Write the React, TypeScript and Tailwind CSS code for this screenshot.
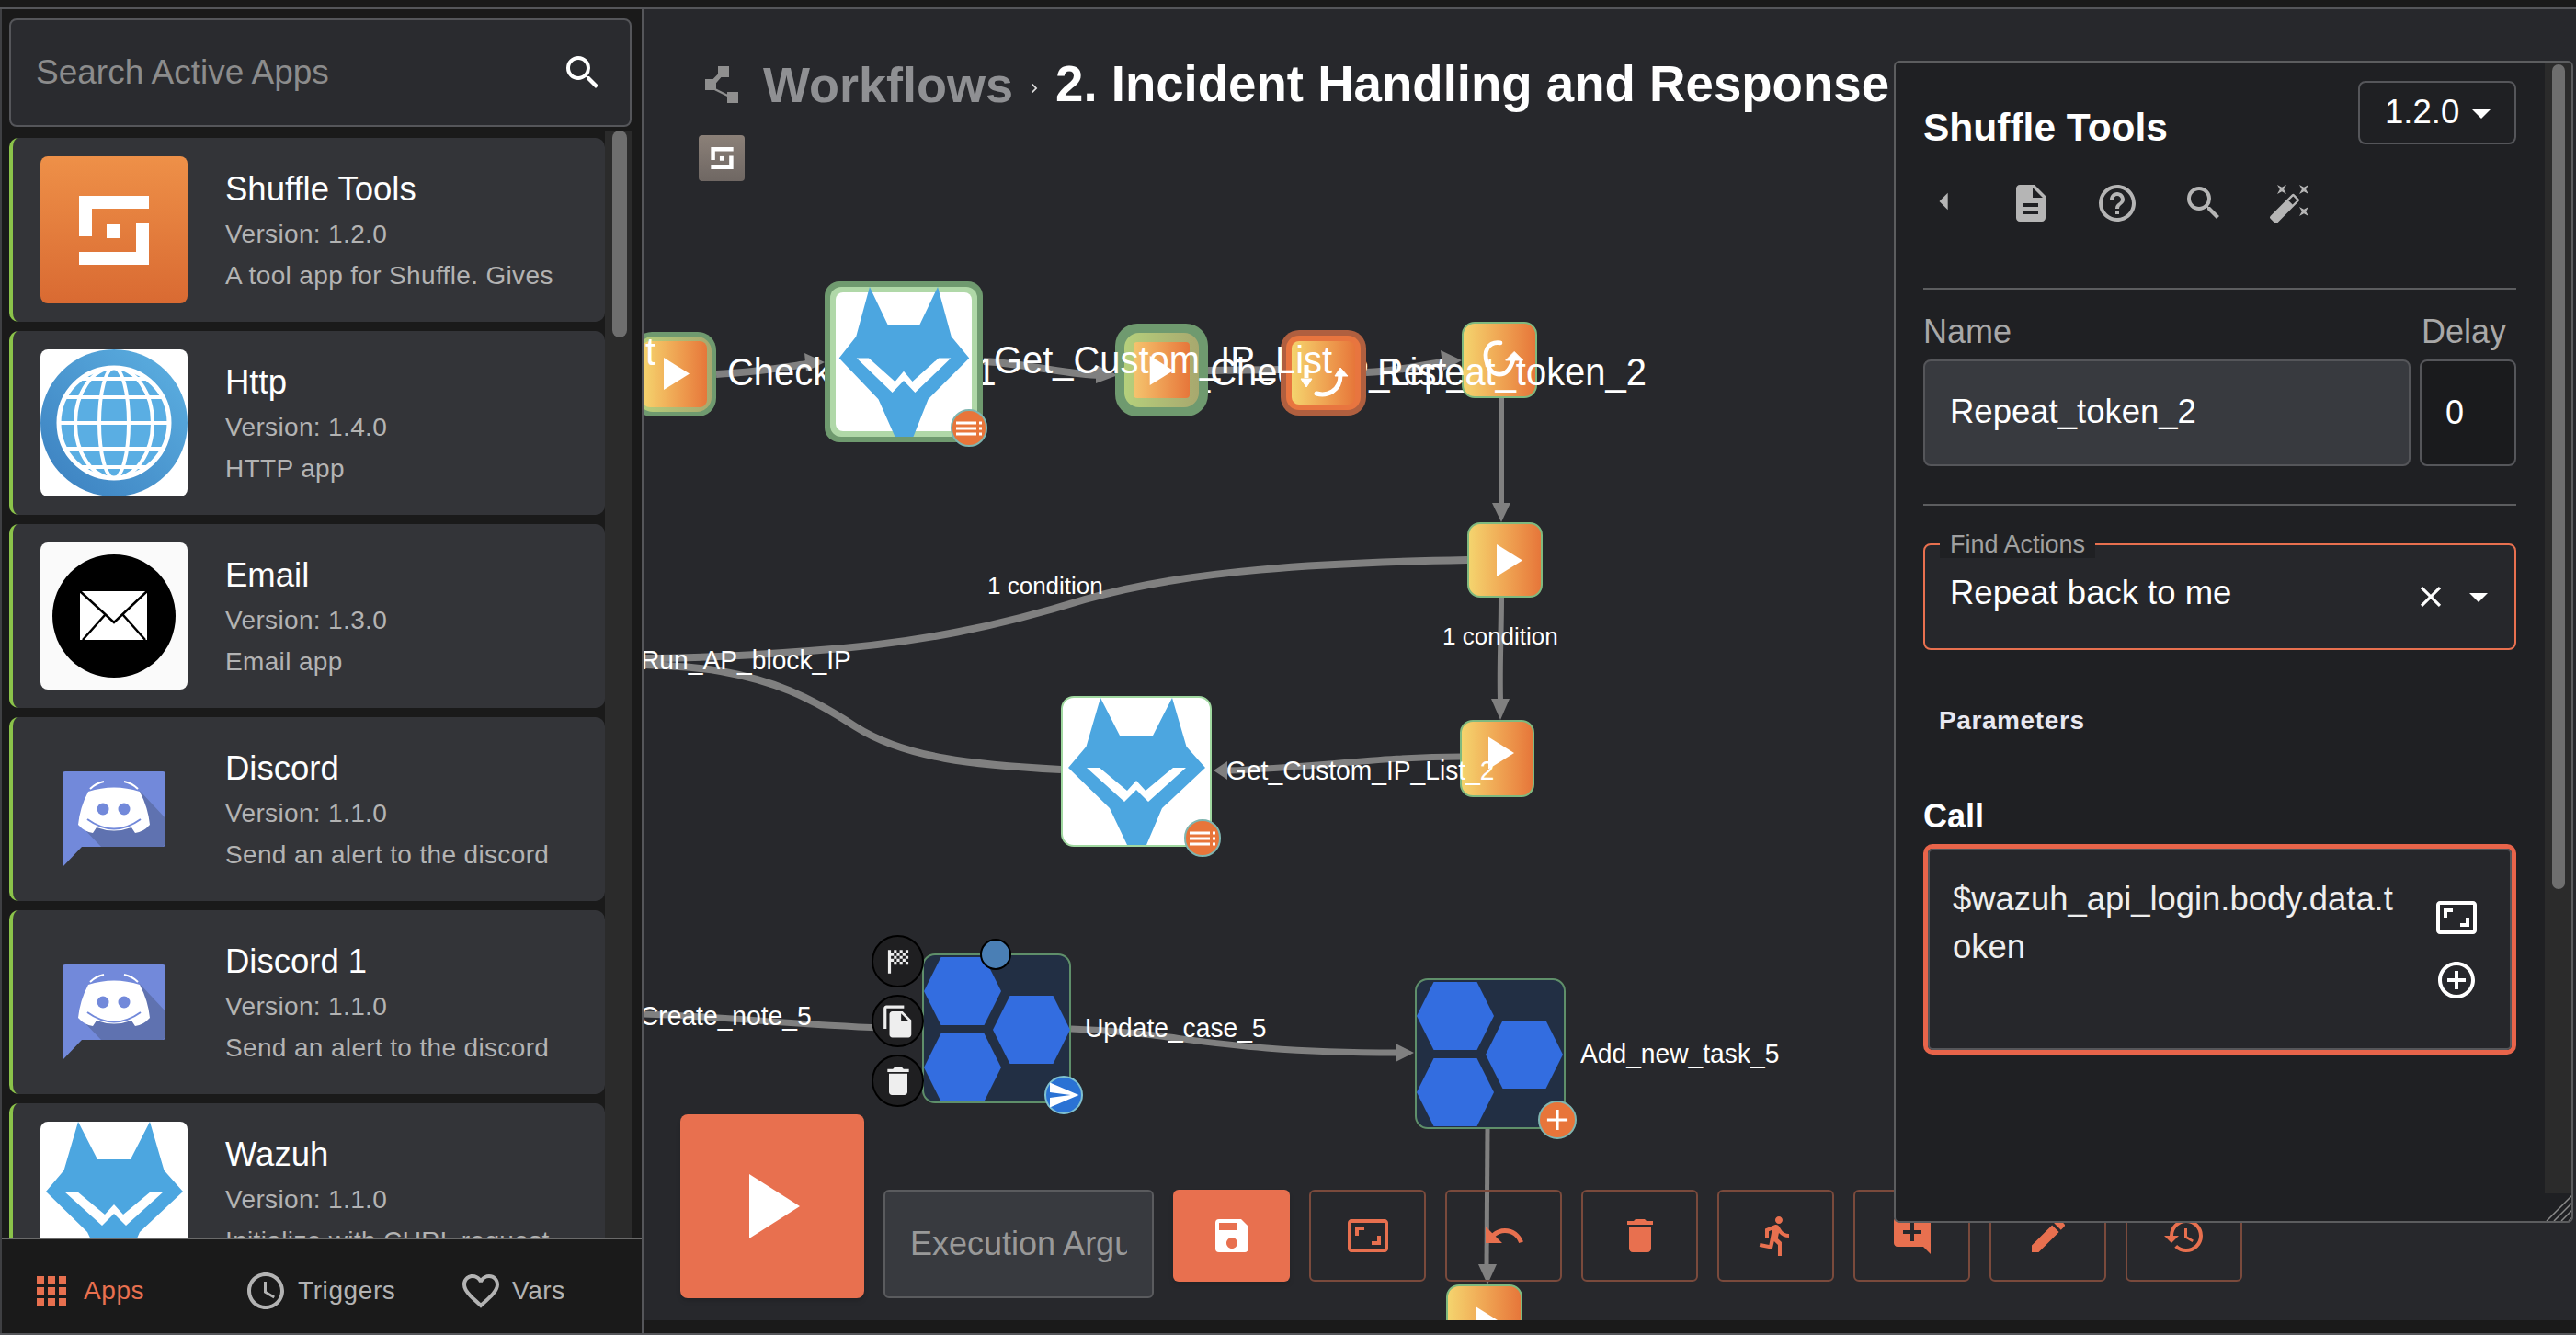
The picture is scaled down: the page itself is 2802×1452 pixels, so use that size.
import React from "react";
import {
  MdAccessTime,
  MdAdd,
  MdAddCircleOutline,
  MdAddComment,
  MdApps,
  MdArrowDropDown,
  MdArrowLeft,
  MdAspectRatio,
  MdAutoFixHigh,
  MdChevronRight,
  MdClose,
  MdDelete,
  MdDescription,
  MdDirectionsRun,
  MdEdit,
  MdFavoriteBorder,
  MdFileCopy,
  MdHelpOutline,
  MdHistory,
  MdSave,
  MdSearch,
  MdSend,
  MdSportsScore,
  MdUndo,
} from "react-icons/md";

function ShuffleLogo({ className }: { className: string }) {
  return (
    <svg viewBox="0 0 76 75" className={className} fill="#fff">
      <path d="M0 0H76V14H14V44H0Z" />
      <path d="M62 30H76V75H0V61H62Z" />
      <rect x="30" y="31" width="15" height="15" />
    </svg>
  );
}

function Fox({ className }: { className: string }) {
  return (
    <svg viewBox="0 0 160 160" className={className} preserveAspectRatio="none">
      <polygon
        points="41,0 62,41 98,41 119,0 134.5,53 155,76 108,120 91,160 70,160 51,120 6,76 25.5,53"
        fill="#4ca6e0"
      />
      <polygon points="26,76 40,76 70,101 80,90 90,101 120,76 134,76 93,113 80,100 67,113" fill="#fff" />
    </svg>
  );
}

function HttpIcon() {
  return (
    <svg viewBox="0 0 160 160" className="w-[160px] h-[160px]">
      <defs>
        <linearGradient id="globeRing" x1="0" y1="1" x2="1" y2="0">
          <stop offset="0" stopColor="#3b7fbf" />
          <stop offset="1" stopColor="#5db1e2" />
        </linearGradient>
        <clipPath id="globeClip">
          <circle cx="80" cy="80" r="60" />
        </clipPath>
      </defs>
      <circle cx="80" cy="80" r="80" fill="url(#globeRing)" />
      <circle cx="80" cy="80" r="60" fill="#5aaee3" stroke="#fff" strokeWidth="5" />
      <g clipPath="url(#globeClip)" fill="none" stroke="#fff" strokeWidth="4">
        <ellipse cx="80" cy="80" rx="16" ry="60" />
        <ellipse cx="80" cy="80" rx="42" ry="60" />
        <path d="M20 80H140M24 52H136M24 108H136M38 32H122M38 128H122" />
      </g>
    </svg>
  );
}

function EmailIcon() {
  return (
    <svg viewBox="0 0 160 160" className="w-[160px] h-[160px]">
      <circle cx="80" cy="80" r="67" fill="#000" />
      <rect x="43" y="53" width="73" height="53" fill="#fff" />
      <path
        d="M43 53L80 87L116 53M46 106L70 79M114 106L90 79"
        fill="none"
        stroke="#000"
        strokeWidth="2.5"
      />
    </svg>
  );
}

function DiscordIcon() {
  return (
    <svg viewBox="0 0 160 160" className="w-[160px] h-[160px]">
      <path
        d="M27 39H133Q136 39 136 42V118Q136 121 133 121H45L24 143V42Q24 39 27 39Z"
        fill="#7289da"
      />
      <polygon points="108,60 136,90 136,118 133,121 66,121 44,98 80,100 118,95" fill="#5f72b0" />
      <path
        d="M52 61Q80 52 108 61Q117 78 119 97Q112 105 103 106L99 100Q80 107 61 100L57 106Q48 105 41 97Q43 78 52 61Z"
        fill="#fff"
      />
      <path d="M54 58Q60 52 69 50M91 50Q100 52 106 58" fill="none" stroke="#fff" strokeWidth="2" />
      <path d="M51 91Q80 112 109 91" fill="none" stroke="#7289da" strokeWidth="2" />
      <circle cx="68" cy="80" r="6.5" fill="#7289da" />
      <circle cx="91" cy="80" r="6.5" fill="#7289da" />
    </svg>
  );
}

function AppCard({
  icon,
  title,
  version,
  desc,
  iconBg,
}: {
  icon: React.ReactNode;
  title: string;
  version: string;
  desc: string;
  iconBg: string;
}) {
  return (
    <div className="h-[200px] shrink-0 flex bg-[#333438] rounded-[10px] border-l-4 border-[#8bc34a] pl-[30px]">
      <div className={`w-[160px] h-[160px] mt-[20px] rounded-[8px] overflow-hidden shrink-0 ${iconBg}`}>
        {icon}
      </div>
      <div className="ml-[41px] pt-[38px]">
        <div className="text-[36.5px] leading-none text-white">{title}</div>
        <div className="mt-[7px] text-[28px] leading-[45px] tracking-[0.35px] text-[#b3b3b3]">{version}</div>
        <div className="text-[28px] leading-[45px] tracking-[0.35px] text-[#b3b3b3] whitespace-nowrap">{desc}</div>
      </div>
    </div>
  );
}

function Sidebar() {
  return (
    <div className="w-[700px] shrink-0 flex flex-col bg-[#1a1a1a] border-l-2 border-r-2 border-[#3f4043] border-r-[#55565a]">
      <div className="mt-[10px] ml-[8px] w-[677px] h-[118px] shrink-0 flex items-center justify-between pl-[27px] pr-[27px] bg-[#2a2b2f] border-2 border-[#55565a] rounded-[8px]">
        <span className="text-[37px] text-[#8c8c8c]">Search Active Apps</span>
        <MdSearch size={48} className="text-white" />
      </div>
      <div className="mt-[4px] ml-[8px] flex-1 min-h-0 flex overflow-hidden">
        <div className="w-[648px] pt-[8px] flex flex-col gap-[10px]">
          <AppCard
            title="Shuffle Tools"
            version="Version: 1.2.0"
            desc="A tool app for Shuffle. Gives"
            iconBg="bg-linear-to-b from-[#ee9048] to-[#d96a32] flex items-center justify-center"
            icon={<ShuffleLogo className="w-[76px] h-[75px]" />}
          />
          <AppCard title="Http" version="Version: 1.4.0" desc="HTTP app" iconBg="bg-white" icon={<HttpIcon />} />
          <AppCard title="Email" version="Version: 1.3.0" desc="Email app" iconBg="bg-[#fafafa]" icon={<EmailIcon />} />
          <AppCard
            title="Discord"
            version="Version: 1.1.0"
            desc="Send an alert to the discord"
            iconBg=""
            icon={<DiscordIcon />}
          />
          <AppCard
            title="Discord 1"
            version="Version: 1.1.0"
            desc="Send an alert to the discord"
            iconBg=""
            icon={<DiscordIcon />}
          />
          <AppCard
            title="Wazuh"
            version="Version: 1.1.0"
            desc="Initialize with CURL request"
            iconBg="bg-white"
            icon={<Fox className="w-[160px] h-[160px]" />}
          />
        </div>
        <div className="w-[29px] bg-[#2b2b2b]">
          <div className="mx-[8px] w-[16px] h-[225px] rounded-full bg-[#6e6e6e]" />
        </div>
      </div>
      <div className="h-[104px] shrink-0 flex items-center pt-[10px] pl-[30px] border-t-2 border-[#6a6a6a] text-[28px] tracking-[0.6px]">
        <div className="w-[233px] flex items-center gap-[11px] text-[#e8704f]">
          <MdApps size={48} />
          <span>Apps</span>
        </div>
        <div className="w-[234px] flex items-center gap-[11px] text-[#b3b3b3]">
          <MdAccessTime size={48} />
          <span>Triggers</span>
        </div>
        <div className="flex items-center gap-[10px] text-[#b3b3b3]">
          <MdFavoriteBorder size={48} />
          <span>Vars</span>
        </div>
      </div>
    </div>
  );
}

function Edges() {
  const stroke = "#808080";
  return (
    <svg viewBox="700 10 2102 1426" className="absolute left-0 top-0 w-[2102px] h-[1426px]">
      <g fill="none" stroke={stroke}>
        <path strokeWidth="8" d="M779 407C820 405 850 400 878 396" />
        <path strokeWidth="8" d="M1070 393C1120 396 1165 408 1196 408" />
        <path strokeWidth="8" d="M1314 403L1395 402" />
        <path strokeWidth="8" d="M1486 405C1520 404 1540 398 1570 394" />
        <path strokeWidth="6" d="M1633 433L1633 548" />
        <path strokeWidth="6" d="M1633 650C1633 690 1631 720 1632 762" />
        <path strokeWidth="8" d="M1596 609C1440 612 1290 620 1180 652C1090 680 1000 700 880 708C800 714 740 716 700 716" />
        <path strokeWidth="8" d="M1154 837C1060 832 985 825 930 790C880 757 840 740 784 730C760 726 730 724 700 723" />
        <path strokeWidth="7" d="M1590 823C1500 823 1430 835 1335 838" />
        <path strokeWidth="7" d="M700 1103C780 1105 860 1114 960 1118" />
        <path strokeWidth="7" d="M1165 1119C1280 1122 1320 1145 1520 1145" />
        <path strokeWidth="5" d="M1618 1228L1617 1378" />
      </g>
      <g fill={stroke}>
        <polygon points="897,394 875,384 877,404" />
        <polygon points="1216,408 1192,397 1192,417" />
        <polygon points="1590,392 1567,381 1570,403" />
        <polygon points="1633,568 1623,547 1643,547" />
        <polygon points="1632,783 1622,760 1642,760" />
        <polygon points="1320,838 1335,828 1335,848" />
        <polygon points="1538,1145 1518,1135 1518,1155" />
        <polygon points="1618,1397 1608,1375 1628,1375" />
      </g>
    </svg>
  );
}

function Triangle({ className }: { className: string }) {
  return (
    <svg viewBox="0 0 28 35" className={className}>
      <polygon points="0,0 28,17.5 0,35" fill="#fff" />
    </svg>
  );
}

function ListBadge({ className }: { className: string }) {
  return (
    <div className={`absolute w-[40px] h-[41px] rounded-full bg-[#e8753a] border-2 border-[#7fb5b0] flex items-center justify-center ${className}`}>
      <svg viewBox="0 0 28 16" className="w-[28px] h-[16px]">
        <path d="M0 2H22M0 8H22M0 14H22M25 2H28M25 8H28M25 14H28" stroke="#fff" strokeWidth="3" />
      </svg>
    </div>
  );
}

function HexNode({ className, children }: { className: string; children?: React.ReactNode }) {
  return (
    <div className={`absolute bg-[#222f44] border-2 border-[#5f8f6a] rounded-[14px] ${className}`}>
      <svg viewBox="0 0 162 163" className="absolute -left-[1px] -top-[1px] w-[162px] h-[163px]">
        <g fill="#336de0">
          <polygon points="1,40 19.5,3 66.5,3 85,40 66.5,77 19.5,77" />
          <polygon points="76,82 94.5,45 141.5,45 160,82 141.5,119 94.5,119" />
          <polygon points="1,123 19.5,86 66.5,86 85,123 66.5,160 19.5,160" />
        </g>
      </svg>
      {children}
    </div>
  );
}

function SideButton({ className, children }: { className: string; children: React.ReactNode }) {
  return (
    <div className={`absolute w-[57px] h-[57px] rounded-full bg-[#1f1f21] border-2 border-black flex items-center justify-center text-[#eee] ${className}`}>
      {children}
    </div>
  );
}

function Label({ className, children }: { className: string; children: React.ReactNode }) {
  return <div className={`absolute leading-none whitespace-nowrap text-white origin-left ${className}`}>{children}</div>;
}

function Diagram() {
  const plainNode = "absolute rounded-[14px] border-2 border-[#7fb97f] bg-linear-to-r from-[#f4d46e] to-[#e6763a] flex items-center justify-center";
  const bigLabel = "text-[42px] scale-x-[0.95]";
  const smallLabel = "text-[30px] scale-x-[0.94]";
  return (
    <>
      <Edges />

      {/* labels that sit under their nodes */}
      <Label className={`left-[91px] top-[374px] ${bigLabel}`}>Check_Status_1</Label>
      <Label className={`left-[594px] top-[374px] ${bigLabel}`}>_Check_IP_List_2</Label>

      {/* top row */}
      <div className="absolute left-[-11px] top-[351px] w-[90px] h-[92px] rounded-[20px] bg-[#6f9a6f] p-[5px]">
        <div className="w-full h-full rounded-[16px] bg-linear-to-r from-[#b5d07c] to-[#a8a86e] p-[5px]">
          <div className="w-full h-full rounded-[8px] bg-linear-to-r from-[#f4d46e] to-[#e6763a] relative">
            <Triangle className="absolute left-[23px] top-[18px] w-[28px] h-[35px]" />
          </div>
        </div>
      </div>
      <div className="absolute left-[197px] top-[296px] w-[172px] h-[175px] rounded-[16px] bg-[#6f9a6f] p-[6px]">
        <div className="relative w-full h-full rounded-[12px] bg-[#b0d8a8] p-[6px]">
          <div className="w-full h-full rounded-[8px] bg-white" />
          <Fox className="absolute left-[4px] top-0 w-[152px] h-[163px]" />
        </div>
      </div>
      <ListBadge className="left-[334px] top-[435px]" />

      <div className="absolute left-[513px] top-[342px] w-[101px] h-[101px] rounded-[24px] bg-[#6f9a6f] p-[10px]">
        <div className="w-full h-full rounded-[16px] bg-linear-to-r from-[#b5d07c] to-[#a8a86e] p-[10px]">
          <div className="w-full h-full rounded-[4px] bg-linear-to-r from-[#f4c46e] to-[#e6763a] flex items-center justify-center">
            <Triangle className="w-[29px] h-[32px]" />
          </div>
        </div>
      </div>

      <div className="absolute left-[693px] top-[349px] w-[93px] h-[93px] rounded-[20px] bg-[#b05f3f] p-[6px]">
        <div className="w-full h-full rounded-[14px] bg-[#e8753f] p-[6px]">
          <div className="relative w-full h-full rounded-[8px] bg-linear-to-r from-[#f4d46e] to-[#e6763a]">
            <svg viewBox="0 0 69 69" className="absolute left-0 top-0 w-[69px] h-[69px]" fill="none" stroke="#fff" strokeWidth="5">
              <path d="M16 26V40" />
              <polygon points="10,41 22,41 16,50" fill="#fff" strokeWidth="1" />
              <path d="M27 57C38 60 53 55 53 37" strokeLinecap="round" />
              <polygon points="53,29 47,38 61,38" fill="#fff" strokeWidth="1" />
            </svg>
          </div>
        </div>
      </div>

      <div className={`${plainNode} left-[890px] top-[340px] w-[82px] h-[83px]`}>
        <svg viewBox="0 0 82 83" className="w-[82px] h-[83px]" fill="none" stroke="#fff" strokeWidth="5">
          <path d="M42 22C28 20 22 32 27 46C31 60 50 66 57 40" strokeLinecap="round" />
          <polygon points="58,32 48,42 68,42" fill="#fff" strokeWidth="1" />
        </svg>
      </div>

      {/* middle */}
      <div className={`${plainNode} left-[896px] top-[558px] w-[82px] h-[82px]`}>
        <Triangle className="ml-[9px] w-[28px] h-[35px]" />
      </div>
      <div className={`${plainNode} left-[888px] top-[773px] w-[81px] h-[84px]`}>
        <Triangle className="ml-[9px] mb-[12px] w-[28px] h-[36px]" />
      </div>
      <div className="absolute left-[454px] top-[747px] w-[164px] h-[164px] rounded-[14px] bg-white border-2 border-[#a0d8a0]">
        <Fox className="w-full h-full" />
      </div>
      <ListBadge className="left-[588px] top-[881px]" />

      {/* hex nodes */}
      <HexNode className="left-[303px] top-[1027px] w-[162px] h-[163px]">
        <SideButton className="left-[-57px] top-[-22px]">
          <MdSportsScore size={38} />
        </SideButton>
        <SideButton className="left-[-57px] top-[43px]">
          <MdFileCopy size={38} />
        </SideButton>
        <SideButton className="left-[-57px] top-[108px]">
          <MdDelete size={40} />
        </SideButton>
        <div className="absolute left-[61px] top-[-18px] w-[34px] h-[34px] rounded-full bg-[#4a7fb5] border-2 border-black" />
        <div className="absolute left-[131px] top-[131px] w-[42px] h-[42px] rounded-full bg-[#2a72d4] border-2 border-[#7fc0d0] flex items-center justify-center">
          <MdSend size={36} className="text-white" />
        </div>
      </HexNode>
      <HexNode className="left-[839px] top-[1054px] w-[164px] h-[164px]">
        <div className="absolute left-[132px] top-[131px] w-[42px] h-[42px] rounded-full bg-[#e8753a] border-2 border-[#7fb5b0] flex items-center justify-center">
          <MdAdd size={38} className="text-white" />
        </div>
      </HexNode>
      <div className={`${plainNode} left-[873px] top-[1387px] w-[83px] h-[82px]`}>
        <Triangle className="ml-[9px] w-[28px] h-[35px]" />
      </div>

      {/* labels on top */}
      <Label className={`left-[-49px] top-[352px] ${bigLabel}`}>List</Label>
      <Label className={`left-[381px] top-[361px] ${bigLabel}`}>Get_Custom_IP_List</Label>
      <Label className={`left-[798px] top-[374px] ${bigLabel}`}>Repeat_token_2</Label>
      <Label className="left-[374px] top-[614px] text-[26px]">1 condition</Label>
      <Label className="left-[869px] top-[669px] text-[26px]">1 condition</Label>
      <Label className={`left-[-3px] top-[693px] ${smallLabel}`}>Run_AP_block_IP</Label>
      <Label className={`left-[634px] top-[813px] ${smallLabel}`}>Get_Custom_IP_List_2</Label>
      <Label className={`left-[-4px] top-[1080px] ${smallLabel}`}>Create_note_5</Label>
      <Label className={`left-[480px] top-[1093px] ${smallLabel}`}>Update_case_5</Label>
      <Label className={`left-[1019px] top-[1121px] ${smallLabel}`}>Add_new_task_5</Label>
    </>
  );
}

function ToolButton({ children }: { children: React.ReactNode }) {
  return (
    <div className="w-[127px] h-[100px] rounded-[6px] border-2 border-[#7a4a3c] flex items-center justify-center text-[#e8704f]">
      {children}
    </div>
  );
}

function Toolbar() {
  return (
    <div className="absolute left-[40px] top-[1202px] flex items-start">
      <div className="w-[200px] h-[200px] rounded-[8px] bg-[#e8704f] flex items-center justify-center shadow-md">
        <svg viewBox="0 0 55 70" className="w-[55px] h-[70px] ml-[4px]">
          <polygon points="0,0 55,35 0,70" fill="#fff" />
        </svg>
      </div>
      <div className="mt-[82px] ml-[21px] w-[294px] h-[118px] rounded-[6px] bg-[#383a3f] border-2 border-[#5a5b5e] flex items-center px-[27px] overflow-hidden">
        <span className="text-[36px] text-[#999] whitespace-nowrap overflow-hidden">Execution Arguments</span>
      </div>
      <div className="mt-[82px] ml-[21px] flex gap-[21px]">
        <div className="w-[127px] h-[100px] rounded-[6px] bg-[#e8704f] flex items-center justify-center text-white shadow-md">
          <MdSave size={48} />
        </div>
        <ToolButton>
          <MdAspectRatio size={48} />
        </ToolButton>
        <ToolButton>
          <MdUndo size={48} />
        </ToolButton>
        <ToolButton>
          <MdDelete size={48} />
        </ToolButton>
        <ToolButton>
          <MdDirectionsRun size={48} />
        </ToolButton>
        <ToolButton>
          <MdAddComment size={48} />
        </ToolButton>
        <ToolButton>
          <MdEdit size={48} />
        </ToolButton>
        <ToolButton>
          <MdHistory size={48} />
        </ToolButton>
      </div>
    </div>
  );
}

function Panel() {
  return (
    <div className="absolute left-[1360px] top-[56px] w-[739px] h-[1264px] flex bg-[#1f2023] border-2 border-[#5c5d5f] rounded-[6px] overflow-hidden">
      <div className="w-[706px] pl-[30px] pr-[31px] pt-[20px] text-white">
        <div className="flex justify-between items-start">
          <div className="mt-[30px] -mb-[3px] text-[42.5px] leading-none font-bold">Shuffle Tools</div>
          <div className="w-[172px] h-[69px] flex items-center pl-[27px] border-2 border-[#55565a] rounded-[8px] text-[36.5px]">
            <span>1.2.0</span>
            <MdArrowDropDown size={48} />
          </div>
        </div>

        <div className="mt-[39px] -ml-[24px] flex text-[#b5b5b5]">
          <div className="w-[94px] flex justify-center">
            <MdArrowLeft size={44} />
          </div>
          <div className="w-[94px] flex justify-center">
            <MdDescription size={48} />
          </div>
          <div className="w-[94px] flex justify-center">
            <MdHelpOutline size={48} />
          </div>
          <div className="w-[94px] flex justify-center">
            <MdSearch size={48} />
          </div>
          <div className="w-[94px] flex justify-center">
            <MdAutoFixHigh size={48} />
          </div>
        </div>

        <div className="mt-[68px] h-[2px] bg-[#5c5d5f]" />

        <div className="mt-[28px] grid grid-cols-[530px_105px] gap-x-[10px] gap-y-[12px]">
          <div className="text-[36px] leading-none text-[#a8a8a8]">Name</div>
          <div className="pl-[2px] text-[36px] leading-none text-[#a8a8a8]">Delay</div>
          <div className="h-[116px] flex items-center pl-[27px] bg-[#383a3f] border-2 border-[#55565a] rounded-[8px] text-[36.5px]">
            Repeat_token_2
          </div>
          <div className="h-[116px] flex items-center pl-[26px] bg-[#1a1b1d] border-2 border-[#55565a] rounded-[8px] text-[36px]">
            0
          </div>
        </div>

        <div className="mt-[41px] h-[2px] bg-[#5c5d5f]" />

        <div className="relative mt-[41px] h-[116px] flex items-center pl-[27px] pr-[15px] bg-[#26272b] border-2 border-[#e8704f] rounded-[8px] text-[36.5px]">
          <span className="absolute left-[16px] top-[-16px] px-[11px] bg-[#1f2023] text-[27px] leading-[30px] text-[#a0a0a0]">Find Actions</span>
          <span className="flex-1 -mt-[6px]">Repeat back to me</span>
          <MdClose size={38} />
          <MdArrowDropDown size={48} className="ml-[9px]" />
        </div>

        <div className="mt-[63px] ml-[17px] text-[28px] leading-none font-bold tracking-[0.6px] text-[#e8e8f0]">Parameters</div>

        <div className="mt-[72px] text-[36px] leading-none font-bold">Call</div>

        <div className="mt-[12px] h-[229px] border-[5px] border-[#e8644a] rounded-[10px]">
          <div className="h-full flex pl-[25px] pt-[27px] bg-[#26272b] border-2 border-[#55565a] rounded-[5px]">
            <div className="w-[490px] text-[36.4px] leading-[52px] break-all text-[#eeeeee]">$wazuh_api_login.body.data.token</div>
            <div className="ml-[34px] pt-[22px] flex flex-col gap-[20px]">
              <MdAspectRatio size={48} />
              <MdAddCircleOutline size={48} />
            </div>
          </div>
        </div>
      </div>

      <div className="w-[30px] flex flex-col bg-[#2b2b2b] pt-[2px]">
        <div className="mx-[8px] h-[897px] rounded-full bg-[#6e6e6e]" />
        <div className="flex-1" />
        <div className="h-[30px] bg-[#1f2023]">
          <svg viewBox="0 0 30 30" className="w-[30px] h-[30px]" stroke="#8a8a8a" strokeWidth="1.5">
            <path d="M2 30L30 2M10 30L30 10M18 30L30 18M26 30L30 26" />
          </svg>
        </div>
      </div>
    </div>
  );
}

function Canvas() {
  return (
    <div className="relative h-[1426px] overflow-hidden bg-[#27282c]">
      <Diagram />
      <div className="relative">
        <div className="mt-[42px] h-[80px] pl-[61px] flex items-center">
          <svg viewBox="0 0 24 24" className="w-[48px] h-[48px]" fill="#8f8f8f">
            <path d="M15 16v1.26l-6-3v-3.17L11.7 8H16V2h-6v4.28L7.3 9H3v6h5l7 3.5V22h6v-6z" />
          </svg>
          <span className="ml-[21px] text-[54px] font-bold text-[#8f9093]">Workflows</span>
          <MdChevronRight size={20} className="ml-[13px] mr-[13px] mt-[8px] text-[#ddd]" />
          <span className="text-[54.6px] font-bold text-white whitespace-nowrap">2. Incident Handling and Response</span>
        </div>
        <div className="mt-[15px] ml-[60px] w-[50px] h-[50px] rounded-[4px] bg-linear-to-b from-[#8b8078] to-[#6f6763] flex items-center justify-center">
          <ShuffleLogo className="w-[25px] h-[24px]" />
        </div>
      </div>
      <Toolbar />
      <Panel />
    </div>
  );
}

export default function App() {
  return (
    <div className="w-[2802px] h-[1452px] flex flex-col overflow-hidden bg-[#1a1a1a] font-['Liberation_Sans',sans-serif]">
      <div className="h-[10px] shrink-0 border-b-2 border-[#55565a]" />
      <div className="h-[1440px] flex">
        <Sidebar />
        <div className="flex-1 min-w-0">
          <Canvas />
        </div>
      </div>
      <div className="h-[2px] bg-[#55565a]" />
    </div>
  );
}
